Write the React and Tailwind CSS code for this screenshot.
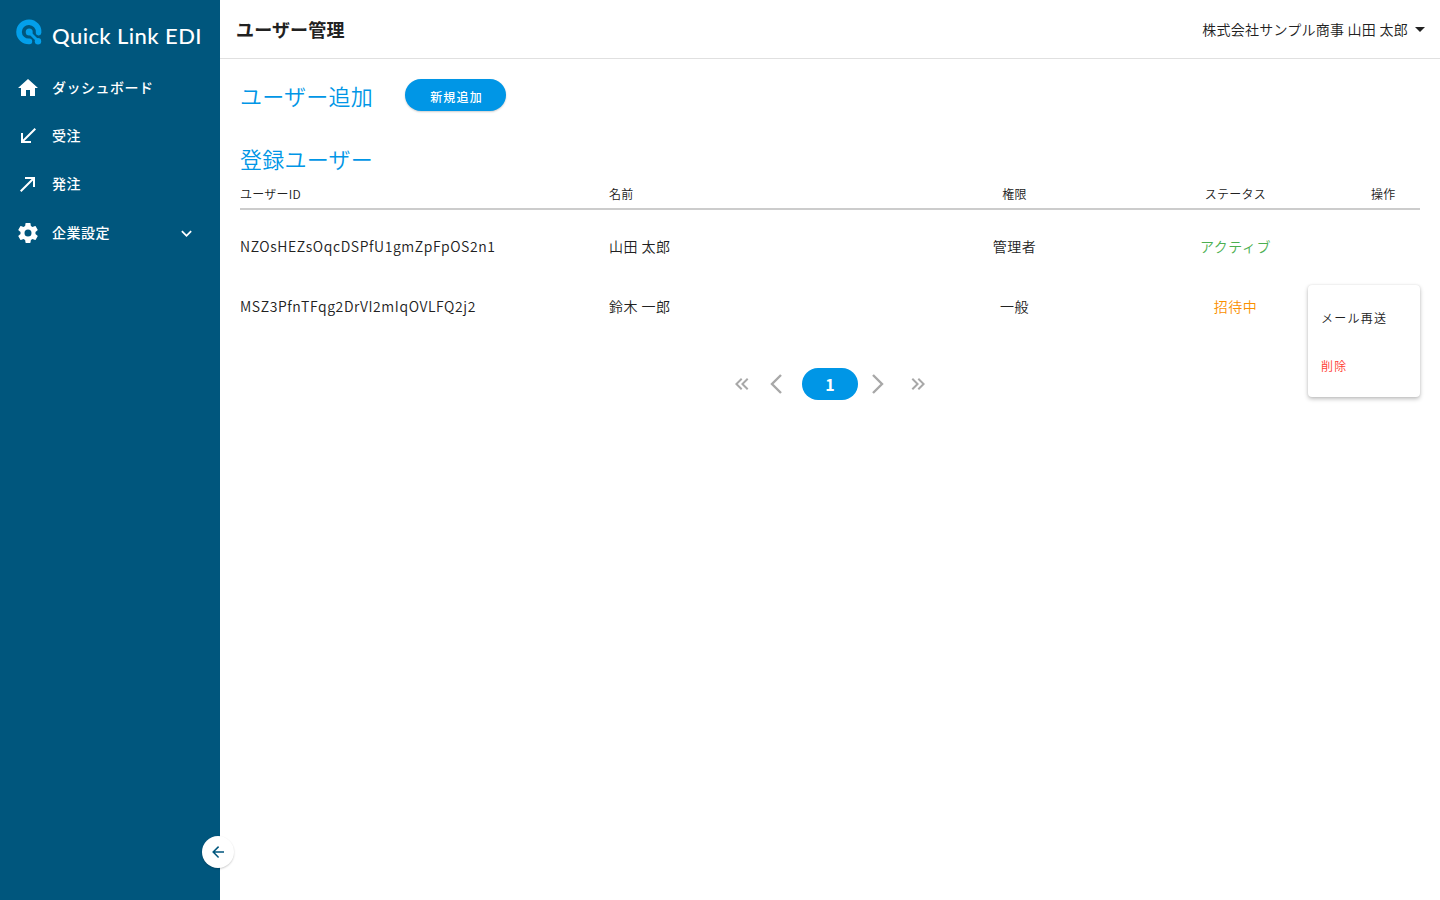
const NAV = [
  { label: 'ダッシュボード', icon: 'M10,20V14H14V20H19V12H22L12,3L2,12H5V20H10Z' },
  { label: '受注', icon: 'M20,5.41L18.59,4L7,15.59V9H5V19H15V17H8.41L20,5.41Z' },
  { label: '発注', icon: 'M9,5V7H15.59L4,18.59L5.41,20L17,8.41V15H19V5H9Z' },
  {
    label: '企業設定',
    icon: 'M12,15.5A3.5,3.5 0 0,1 8.5,12A3.5,3.5 0 0,1 12,8.5A3.5,3.5 0 0,1 15.5,12A3.5,3.5 0 0,1 12,15.5M19.43,12.97C19.47,12.65 19.5,12.33 19.5,12C19.5,11.67 19.47,11.34 19.43,11L21.54,9.37C21.73,9.22 21.78,8.95 21.66,8.73L19.66,5.27C19.54,5.05 19.27,4.96 19.05,5.05L16.56,6.05C16.04,5.66 15.5,5.32 14.87,5.07L14.5,2.42C14.46,2.18 14.25,2 14,2H10C9.75,2 9.54,2.18 9.5,2.42L9.13,5.07C8.5,5.32 7.96,5.66 7.44,6.05L4.95,5.05C4.73,4.96 4.46,5.05 4.34,5.27L2.34,8.73C2.21,8.95 2.27,9.22 2.46,9.37L4.57,11C4.53,11.34 4.5,11.67 4.5,12C4.5,12.33 4.53,12.65 4.57,12.97L2.46,14.63C2.27,14.78 2.21,15.05 2.34,15.27L4.34,18.73C4.46,18.95 4.73,19.03 4.95,18.95L7.44,17.94C7.96,18.34 8.5,18.68 9.13,18.93L9.5,21.58C9.54,21.82 9.75,22 10,22H14C14.25,22 14.46,21.82 14.5,21.58L14.87,18.93C15.5,18.67 16.04,18.34 16.56,17.94L19.05,18.95C19.27,19.03 19.54,18.95 19.66,18.73L21.66,15.27C21.78,15.05 21.73,14.78 21.54,14.63L19.43,12.97Z',
    expandable: true,
  },
];

const USERS = [
  { id: 'NZOsHEZsOqcDSPfU1gmZpFpOS2n1', name: '山田 太郎', role: '管理者', status: 'アクティブ', color: 'text-[#4caf50]' },
  { id: 'MSZ3PfnTFqg2DrVI2mIqOVLFQ2j2', name: '鈴木 一郎', role: '一般', status: '招待中', color: 'text-[#fb9000]' },
];

const COLUMNS = 'grid grid-cols-[369px_295px_221px_221px_74px]';

function Icon({ d, className }) {
  return (
    <svg viewBox="0 0 24 24" fill="currentColor" className={className} aria-hidden="true">
      <path d={d} />
    </svg>
  );
}

function Chevron({ points, className }) {
  return (
    <svg viewBox="0 0 24 24" fill="none" stroke="currentColor" strokeWidth="2.4" className={className} aria-hidden="true">
      <polyline points={points} />
    </svg>
  );
}

function LogoMark() {
  return (
    <svg viewBox="0 0 26 26" className="h-[26px] w-[26px] shrink-0" aria-hidden="true">
      <g fill="none" stroke="#039fea" strokeLinecap="round">
        <path strokeWidth="5.6" d="M13.4 22.4A9.8 9.6 0 1 1 22.6 13.6" />
        <path strokeWidth="3" d="M13.2 13.2L21.7 21.7" />
      </g>
      <circle cx="13.2" cy="13" r="3.5" fill="#039fea" />
      <circle cx="22" cy="22.2" r="3.2" fill="#039fea" />
    </svg>
  );
}

function Sidebar() {
  return (
    <aside className="relative flex h-full w-[220px] shrink-0 flex-col bg-[#00567d] text-white">
      <div className="flex h-16 items-center gap-[10px] pl-4">
        <LogoMark />
        <span className="whitespace-nowrap pt-[8px] font-['Lato',sans-serif] text-[22px] font-medium leading-none tracking-[0.42px]">
          Quick Link EDI
        </span>
      </div>
      <nav className="flex flex-col">
        {NAV.map((item) => (
          <a key={item.label} className="flex h-12 items-center pl-4 pr-[22px] text-[14px] font-medium tracking-[0.5px] last:h-[50px]">
            <Icon d={item.icon} className="mr-3 h-6 w-6" />
            <span className="grow pb-[2px]">{item.label}</span>
            {item.expandable && (
              <Icon d="M7.41,8.58L12,13.17L16.59,8.58L18,10L12,16L6,10L7.41,8.58Z" className="mr-[1px] h-[21px] w-[21px]" />
            )}
          </a>
        ))}
      </nav>
      <button className="absolute -right-[14px] bottom-8 flex h-8 w-8 items-center justify-center rounded-full bg-white text-[#00567d] shadow-[0_1px_2px_rgba(0,0,0,0.2)]">
        <Icon d="M20,11V13H8L13.5,18.5L12.08,19.92L4.16,12L12.08,4.08L13.5,5.5L8,11H20Z" className="h-[18px] w-[18px]" />
      </button>
    </aside>
  );
}

function Header() {
  return (
    <header className="flex h-[59px] items-center justify-between border-b border-[#e0e0e0] pl-4 pr-2">
      <h1 className="pt-px text-[18px] font-bold tracking-[0.15px]">ユーザー管理</h1>
      <button className="flex items-center text-[14px] font-[350] tracking-[0.25px]">
        株式会社サンプル商事 山田 太郎
        <Icon d="M7,10L12,15L17,10H7Z" className="h-6 w-6" />
      </button>
    </header>
  );
}

function UserTable() {
  return (
    <div>
      <div className={COLUMNS + ' h-[34px] items-center border-b-2 border-[#cccccc] pt-[3px] text-[12px] tracking-[0.25px]'}>
        <span>ユーザーID</span>
        <span>名前</span>
        <span className="text-center">権限</span>
        <span className="text-center">ステータス</span>
        <span className="pl-[25px]">操作</span>
      </div>
      <div className="pt-[6px]">
        {USERS.map((u) => (
          <div key={u.id} className={COLUMNS + ' h-[60px] items-center text-[14px] tracking-[0.5px]'}>
            <span className="tracking-[0.59px]">{u.id}</span>
            <span>{u.name}</span>
            <span className="text-center">{u.role}</span>
            <span className={'text-center ' + u.color}>{u.status}</span>
          </div>
        ))}
      </div>
    </div>
  );
}

function Pagination() {
  return (
    <div className="mt-8 flex h-8 items-center justify-center text-[#a8a8a8]">
      <Icon d="M18.41,7.41L17,6L11,12L17,18L18.41,16.59L13.83,12L18.41,7.41M12.41,7.41L11,6L5,12L11,18L12.41,16.59L7.83,12L12.41,7.41Z" className="mr-[10px] h-6 w-6" />
      <Chevron points="17,3 8,12 17,21" className="mr-[14px] h-6 w-6" />
      <span className="flex h-8 w-14 items-center justify-center rounded-full bg-[#0096e6] text-[16px] font-bold text-white">1</span>
      <Chevron points="7,3 16,12 7,21" className="ml-[8px] h-6 w-6" />
      <Icon d="M5.59,7.41L7,6L13,12L7,18L5.59,16.59L10.17,12L5.59,7.41M11.59,7.41L13,6L19,12L13,18L11.59,16.59L16.17,12L11.59,7.41Z" className="ml-[16px] h-6 w-6" />
    </div>
  );
}

export default function App() {
  return (
    <div className="relative flex h-[900px] w-[1440px] overflow-hidden bg-white font-['Noto_Sans_CJK_JP',sans-serif] font-[350] text-[#212121]">
      <Sidebar />
      <main className="flex grow flex-col">
        <Header />
        <div className="px-5 pt-5">
          <div className="flex h-8 items-center gap-8">
            <h2 className="text-[22px] tracking-[0.25px] text-[#0096e6]">ユーザー追加</h2>
            <button className="flex h-8 w-[101px] items-center justify-center rounded-full bg-[#0096e6] pl-[2px] pt-[3px] text-[12px] font-medium tracking-[1.2px] text-white shadow-[0_1px_2px_rgba(0,0,0,0.2)]">
              新規追加
            </button>
          </div>
          <h2 className="mt-8 flex h-[33px] items-center pb-[2px] text-[22px] tracking-[0.25px] text-[#0096e6]">登録ユーザー</h2>
          <UserTable />
          <Pagination />
        </div>
      </main>
      <div className="absolute left-[1308px] top-[285px] flex h-28 w-28 flex-col rounded bg-white py-2 text-[12px] tracking-[1.25px] shadow-[0_2px_4px_rgba(0,0,0,0.25),0_0_2px_rgba(0,0,0,0.1)]">
        <button className="flex h-12 items-center pl-[13px] pt-[2px]">メール再送</button>
        <button className="flex h-12 items-center pl-[13px] pt-[2px] text-[#ff3b30]">削除</button>
      </div>
    </div>
  );
}
